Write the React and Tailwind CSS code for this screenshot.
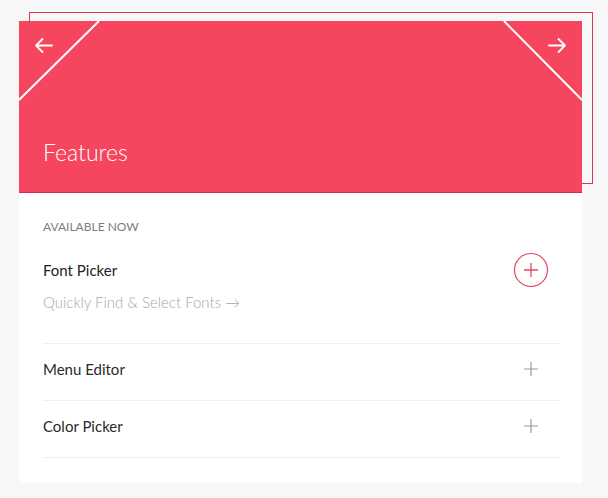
import React from "react";

function PlusCircle() {
  return (
    <svg width="36" height="36" viewBox="0 0 36 36" fill="none">
      <circle cx="18" cy="18" r="16.5" stroke="#e4475f" strokeWidth="1.2" />
      <path d="M11 18H25M18 11V25" stroke="#e4475f" strokeWidth="1.3" />
    </svg>
  );
}

function PlusGray() {
  return (
    <svg width="14" height="14" viewBox="0 0 14 14" fill="none">
      <path d="M0 7H14M7 0V14" stroke="#9a9a9a" strokeWidth="1.2" />
    </svg>
  );
}

function Row({ label }) {
  return (
    <div className="flex h-[57px] items-start justify-between border-b border-[#efefef] pt-[15px] pr-[22px]">
      <span className="text-[15px] leading-[20px] text-[#2a2a2a]">{label}</span>
      <span className="mt-[3px] flex">
        <PlusGray />
      </span>
    </div>
  );
}

export default function App() {
  return (
    <div
      className="min-h-[498px] w-[608px] bg-[#f7f7f7] pt-[21px] pl-[19px]"
      style={{ fontFamily: "Lato, 'Noto Sans', sans-serif" }}
    >
      <div className="w-[563px] bg-white pb-[25px]">
        <div className="relative">
          <div className="absolute left-[10px] top-[-9px] h-[172px] w-[564px] border border-[#e0354f]" />
          <div className="relative h-[172px] border-b border-[#d42f49] bg-[#f5455f]">
            <svg
              className="absolute left-0 top-0"
              width="563"
              height="171"
              viewBox="0 0 563 171"
              fill="none"
            >
              <path d="M80 0L0 79" stroke="#ffffff" strokeWidth="2" />
              <path d="M485 0L563 79" stroke="#ffffff" strokeWidth="2" />
              <path
                d="M33 24.5H17M23.5 18L17 24.5L23.5 31"
                stroke="#ffffff"
                strokeWidth="1.8"
                strokeLinecap="round"
                strokeLinejoin="round"
              />
              <path
                d="M530 24.5H546M539.5 18L546 24.5L539.5 31"
                stroke="#ffffff"
                strokeWidth="1.8"
                strokeLinecap="round"
                strokeLinejoin="round"
              />
            </svg>
            <div className="absolute left-[24px] top-[116px] text-[23px] font-light leading-[30px] text-white">
              Features
            </div>
          </div>
        </div>
        <div className="pl-[24px] pr-[22px]">
          <div className="border-b border-[#efefef] pt-[26px] pb-[31px]">
            <div className="text-[12px] leading-[16px] text-[#7d7d7d]">
              AVAILABLE NOW
            </div>
            <div className="mt-[17px] flex h-[36px] items-center justify-between pr-[11px]">
              <span className="text-[15px] text-[#222]">Font Picker</span>
              <PlusCircle />
            </div>
            <div className="mt-[4px] text-[15px] font-light leading-[20px] text-[#a8a8a8]">
              Quickly Find &amp; Select Fonts →
            </div>
          </div>
          <Row label="Menu Editor" />
          <Row label="Color Picker" />
        </div>
      </div>
    </div>
  );
}
